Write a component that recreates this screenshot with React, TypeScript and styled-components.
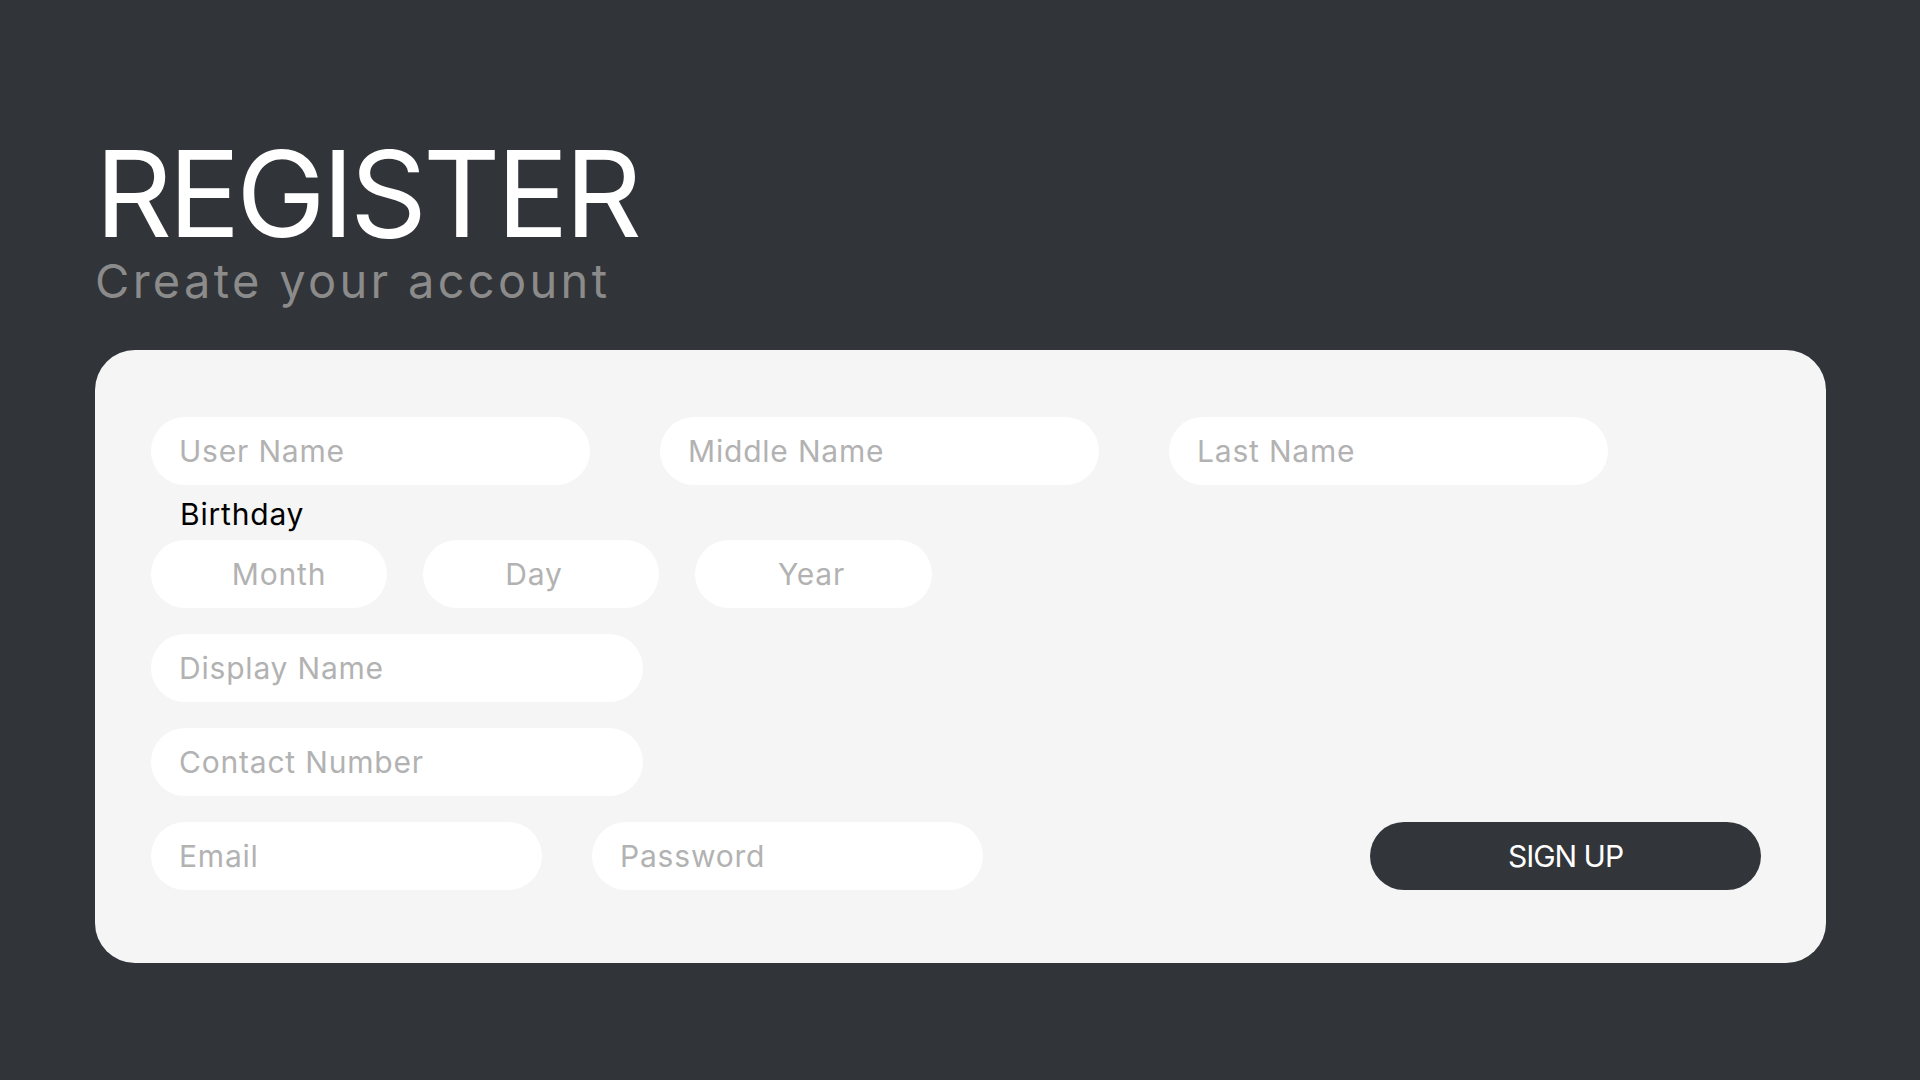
import React from "react";
import styled, { createGlobalStyle } from "styled-components";

const GlobalStyle = createGlobalStyle`
  html, body {
    margin: 0;
    padding: 0;
    background: #313438;
  }
  body {
    font-family: "Inter", "Noto Sans", sans-serif;
  }
  * { box-sizing: border-box; }
`;

const Page = styled.main`
  min-height: 1080px;
  padding: 134px 94px 0 95px;
  display: flex;
  flex-direction: column;
`;

const Title = styled.h1`
  margin: 0;
  font-family: "Inter", sans-serif;
  font-weight: 400;
  font-size: 120px;
  line-height: 120px;
  color: #ffffff;
  letter-spacing: -4px;
`;

const Subtitle = styled.p`
  margin: 4px 0 0;
  font-family: "Inter", sans-serif;
  font-weight: 400;
  font-size: 47px;
  line-height: 46px;
  color: #8b8b8b;
  letter-spacing: 3.3px;
`;

const Card = styled.form`
  margin-top: 46px;
  width: 1731px;
  height: 613px;
  background: #f5f5f5;
  border-radius: 40px;
  padding: 67px 65px 0 56px;
  display: flex;
  flex-direction: column;
  gap: 26px;
`;

const Section = styled.div`
  display: flex;
  flex-direction: column;
`;

const Row = styled.div<{ $gap: number }>`
  display: flex;
  align-items: center;
  gap: ${(p) => p.$gap}px;
`;

const Field = styled.input<{ $width: number; $center?: boolean; $shift?: number }>`
  width: ${(p) => p.$width}px;
  height: 68px;
  border: none;
  outline: none;
  border-radius: 34px;
  background: #ffffff;
  padding: ${(p) =>
    p.$center
      ? `0 ${Math.max(0, -(p.$shift ?? 0) * 2)}px 0 ${Math.max(0, (p.$shift ?? 0) * 2)}px`
      : "0 28px"};
  text-align: ${(p) => (p.$center ? "center" : "left")};
  font-family: "Inter", sans-serif;
  font-size: 30px;
  font-weight: 400;
  letter-spacing: 0.8px;
  color: #333;
  &::placeholder {
    color: #b2b2b2;
    opacity: 1;
  }
`;

const Label = styled.label`
  display: block;
  margin: 11px 0 8px;
  padding-left: 29px;
  font-family: "Inter", sans-serif;
  font-size: 30px;
  line-height: 36px;
  letter-spacing: 0.8px;
  color: #000000;
`;

const SignUp = styled.button`
  margin-left: auto;
  width: 391px;
  height: 68px;
  border: none;
  border-radius: 34px;
  background: #323539;
  color: #ffffff;
  font-family: "Inter", sans-serif;
  font-size: 30px;
  font-weight: 400;
  letter-spacing: -1px;
  cursor: pointer;
`;

export default function App() {
  return (
    <>
      <GlobalStyle />
      <Page>
        <Title>REGISTER</Title>
        <Subtitle>Create your account</Subtitle>
        <Card onSubmit={(e) => e.preventDefault()}>
          <Section>
            <Row $gap={70}>
              <Field $width={439} placeholder="User Name" />
              <Field $width={439} placeholder="Middle Name" />
              <Field $width={439} placeholder="Last Name" />
            </Row>
            <Label>Birthday</Label>
            <Row $gap={36}>
              <Field $width={236} $center $shift={10} placeholder="Month" />
              <Field $width={236} $center $shift={-7} placeholder="Day" />
              <Field $width={237} $center $shift={-2} placeholder="Year" />
            </Row>
          </Section>
          <Row $gap={0}>
            <Field $width={492} placeholder="Display Name" />
          </Row>
          <Row $gap={0}>
            <Field $width={492} placeholder="Contact Number" />
          </Row>
          <Row $gap={50}>
            <Field $width={391} placeholder="Email" />
            <Field $width={391} type="password" placeholder="Password" />
            <SignUp type="submit">SIGN UP</SignUp>
          </Row>
        </Card>
      </Page>
    </>
  );
}
